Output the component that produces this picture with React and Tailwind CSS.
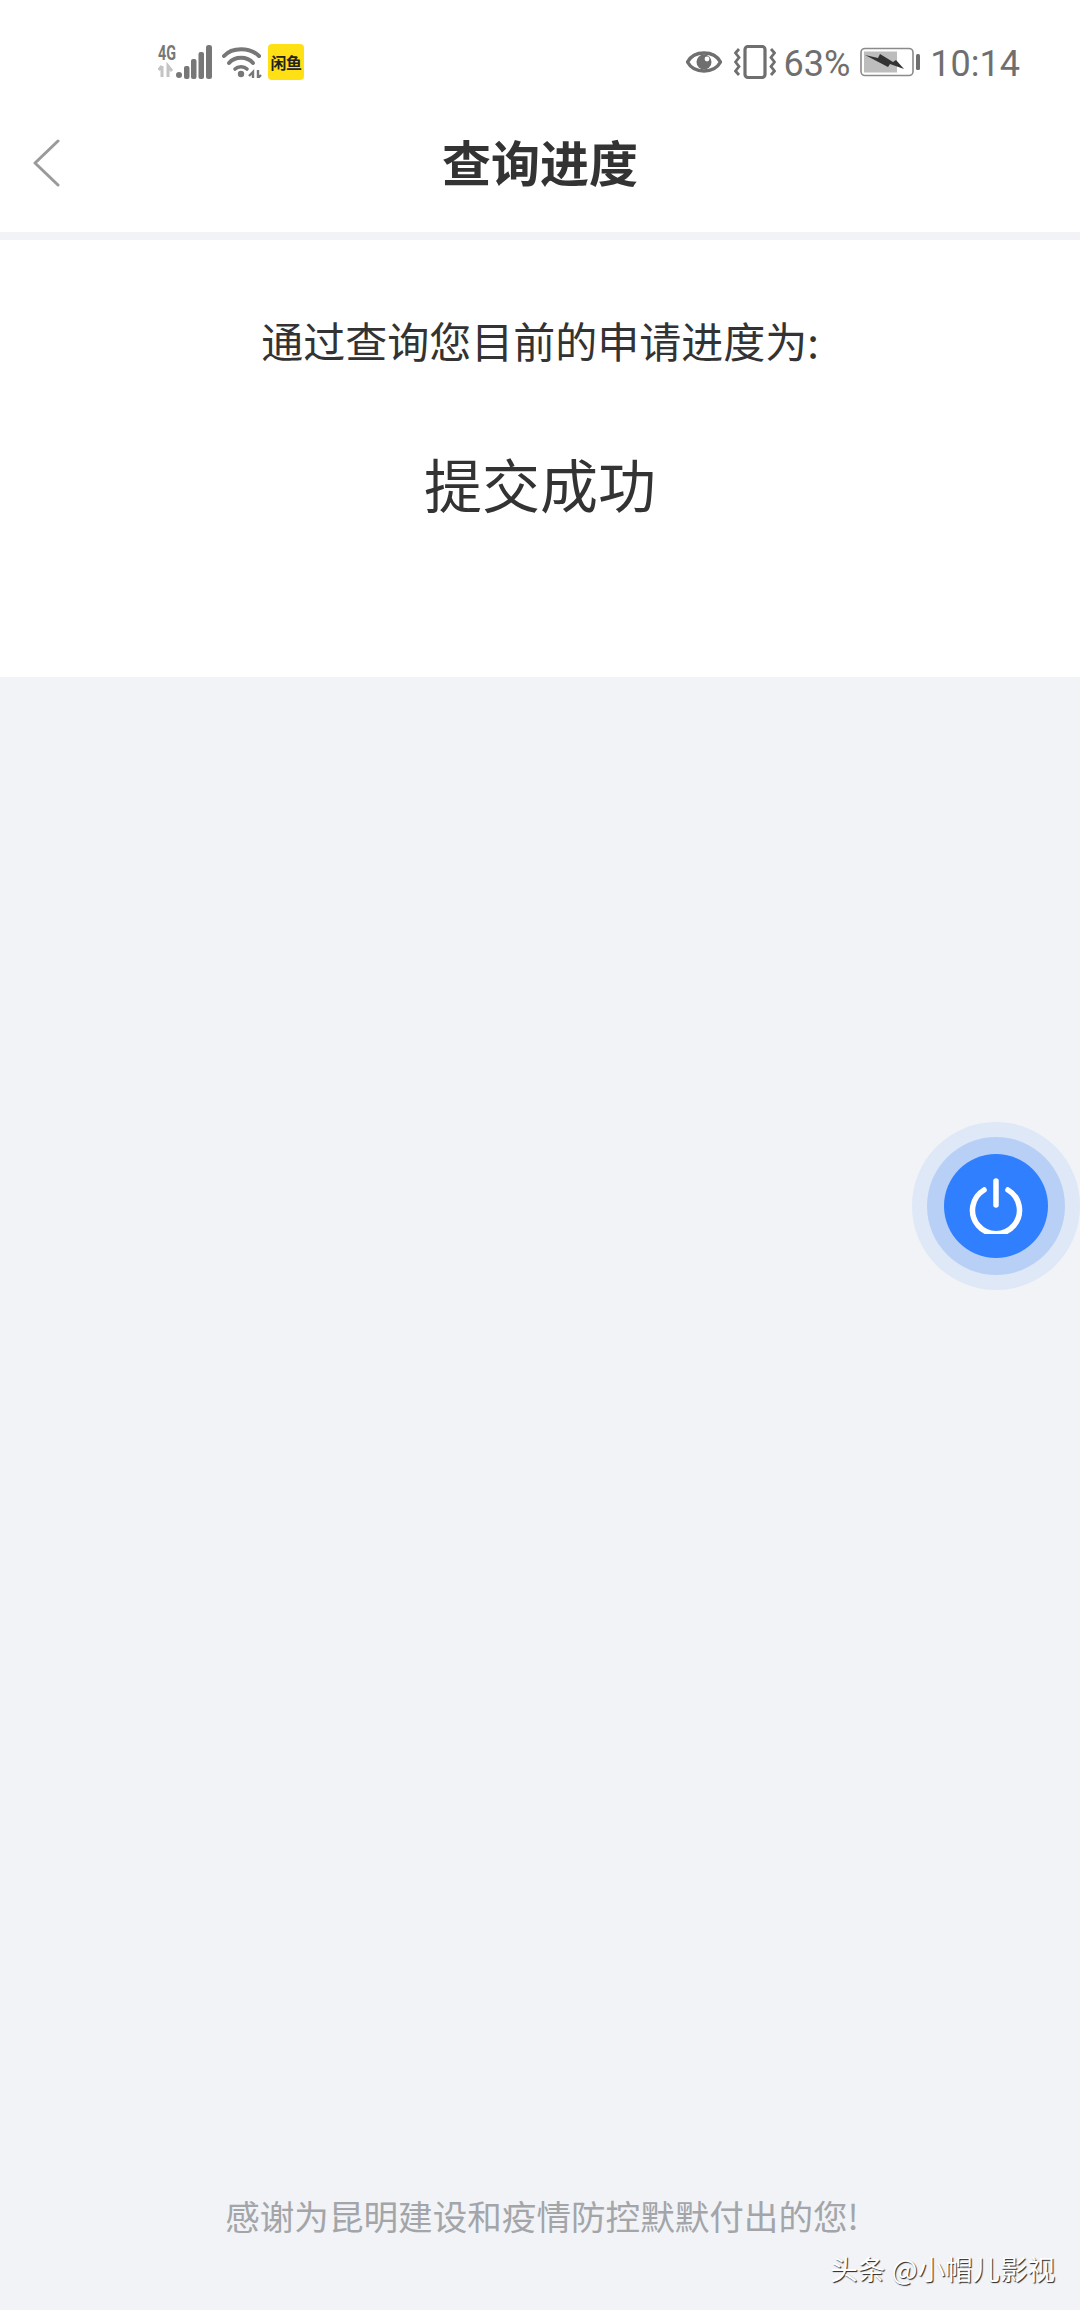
import React from 'react';

const cjk = "font-['Noto_Sans_CJK_SC','Noto_Sans',sans-serif]";

// 状态栏左侧：信号 + wifi + 闲鱼
const SignalIcons = () => (
  <div className="flex items-center">
    <svg width="54" height="46" viewBox="0 -6 54 46">
      <text x="0" y="15" fontSize="20" fontWeight="700" fill="#777" textLength="18" lengthAdjust="spacingAndGlyphs" fontFamily="'Roboto',sans-serif">4G</text>
      <path d="M4 21v11M4 21l-3.5 4M10 32V21l4 5" stroke="#c4c4c4" strokeWidth="3" fill="none" />
      <circle cx="21" cy="30" r="3" fill="#777" />
      <rect x="26" y="21" width="5.5" height="13" rx="2" fill="#777" />
      <rect x="33" y="14" width="5.5" height="20" rx="2" fill="#777" />
      <rect x="40.5" y="7" width="5.5" height="27" rx="2" fill="#777" />
      <rect x="48" y="0" width="6" height="34" rx="2.5" fill="#777" />
    </svg>
    <svg width="40" height="32" viewBox="0 0 40 32" className="ml-[10px]">
      <path d="M2 10C10 1 28 1 37 10" stroke="#777" strokeWidth="4" fill="none" strokeLinecap="round" />
      <path d="M7 17C13 10 25 10 31 17" stroke="#777" strokeWidth="4" fill="none" strokeLinecap="round" />
      <path d="M13 23C16 20 22 20 25 23" stroke="#777" strokeWidth="3.6" fill="none" strokeLinecap="round" />
      <circle cx="19" cy="28" r="3.2" fill="#777" />
      <path d="M27 30l4-4v6M36 24v8l3-3" stroke="#777" strokeWidth="2.4" fill="none" />
    </svg>
    <div className={`ml-[6px] w-[36px] h-[36px] rounded-[4px] bg-[#ffe014] flex items-center justify-center text-[16px] leading-none font-bold text-[#222] whitespace-nowrap tracking-[-0.5px] ${cjk}`}>
      闲鱼
    </div>
  </div>
);

const RightIcons = () => (
  <div className="flex items-center text-[#6f6f6f] font-['Roboto',sans-serif]">
    <svg width="36" height="28" viewBox="0 0 36 28">
      <path d="M1.5 14C8 2 28 2 34.5 14C28 26 8 26 1.5 14Z" stroke="#6f6f6f" strokeWidth="3.4" fill="none" />
      <circle cx="18" cy="14" r="7.5" fill="#6f6f6f" />
      <circle cx="21" cy="11" r="2.4" fill="#fff" />
    </svg>
    <svg width="42" height="34" viewBox="0 0 42 34" className="ml-[12px]">
      <rect x="11" y="1.5" width="20" height="31" rx="3" stroke="#6f6f6f" strokeWidth="3.2" fill="none" />
      <path d="M5 4L1.5 8L5 12.5L1.5 17L5 21.5L1.5 26L5 30" stroke="#6f6f6f" strokeWidth="2.8" fill="none" />
      <path d="M37 4L40.5 8L37 12.5L40.5 17L37 21.5L40.5 26L37 30" stroke="#6f6f6f" strokeWidth="2.8" fill="none" />
    </svg>
    <span className="ml-[8px] text-[36px] leading-none pt-[3px]">63%</span>
    <svg width="60" height="30" viewBox="0 0 60 30" className="ml-[10px]">
      <rect x="1" y="1.5" width="52" height="27" rx="4" stroke="#8a8a8a" strokeWidth="1.6" fill="none" />
      <rect x="4" y="4.5" width="33" height="21" fill="#bdbdbd" />
      <rect x="56" y="7" width="4" height="16" rx="1.5" fill="#6f6f6f" />
      <path d="M5 8L18 11L20 7L33 15L36 13L44 22L30 17L28 20Z" fill="#333" />
    </svg>
    <span className="ml-[10px] text-[36px] leading-none pt-[3px]">10:14</span>
  </div>
);

const App = () => {
  return (
    <div className={`relative w-[1080px] h-[2310px] overflow-hidden bg-[#f1f3f7] flex flex-col ${cjk}`}>

      {/* 顶部 */}
      <div className="bg-white h-[232px] shrink-0 flex flex-col">
        <div className="h-[124px] shrink-0 flex items-center justify-between pl-[158px] pr-[60px]">
          <SignalIcons />
          <RightIcons />
        </div>
        <div className="relative h-[78px] flex items-center justify-center">
          <svg width="30" height="48" viewBox="0 0 30 48" className="absolute left-[32px] top-[15px]">
            <path d="M26 2L3 24L26 46" stroke="#9a9a9a" strokeWidth="3" fill="none" strokeLinecap="round" strokeLinejoin="round" />
          </svg>
          <h1 className="text-[49px] leading-none font-bold text-[#333] -mt-[6px]">查询进度</h1>
        </div>
      </div>

      {/* 进度卡片 */}
      <div className="mt-[8px] bg-white h-[437px] shrink-0 flex flex-col items-center pt-[73px]">
        <p className="text-[42px] leading-[54px] text-[#333]">通过查询您目前的申请进度为:</p>
        <p className="mt-[81px] text-[58px] leading-[70px] text-[#333]">提交成功</p>
      </div>

      {/* 底部文字 */}
      <div className="mt-auto pb-[70px] flex justify-center">
        <p className="text-[34.6px] leading-[50px] text-[#a3a5a9] ml-[4px]">感谢为昆明建设和疫情防控默默付出的您!</p>
      </div>

      {/* 悬浮按钮 */}
      <div className="absolute left-[912px] top-[1122px] w-[168px] h-[168px] rounded-full bg-[#dfe8f7] flex items-center justify-center">
        <div className="w-[138px] h-[138px] rounded-full bg-[#b9d0f6] flex items-center justify-center">
          <div className="w-[104px] h-[104px] rounded-full bg-[#2f7fff] flex items-center justify-center">
            <svg width="56" height="56" viewBox="0 0 56 56">
              <path d="M16 12A23.5 23.5 0 1 0 40 12" stroke="#fff" strokeWidth="5.5" fill="none" strokeLinecap="round" />
              <path d="M28 3V27" stroke="#fff" strokeWidth="5.5" fill="none" strokeLinecap="round" />
            </svg>
          </div>
        </div>
      </div>

      {/* 水印 */}
      <div className="absolute right-[25px] bottom-[23px] text-[27.5px] leading-[38px] text-white [text-shadow:1px_1px_1px_#222] whitespace-nowrap">
        头条 @小帽儿影视
      </div>
    </div>
  );
};

export default App;
